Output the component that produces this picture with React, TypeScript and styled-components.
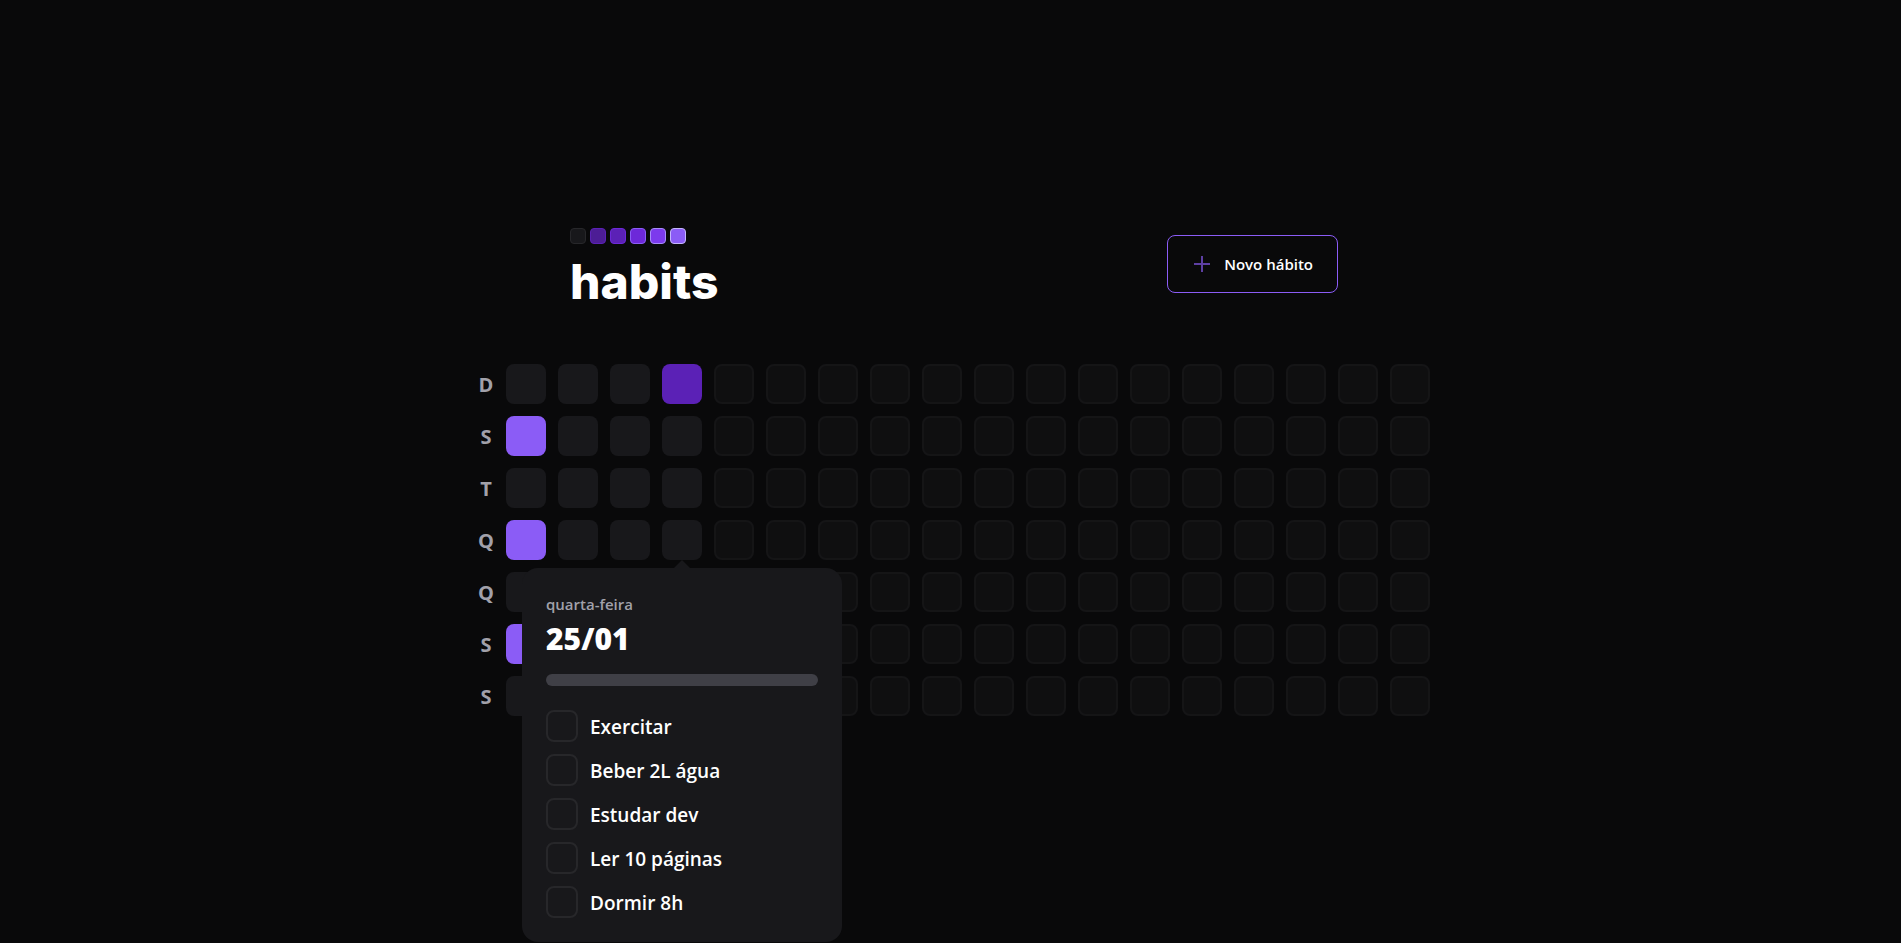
import { useState } from "react";
import styled, { createGlobalStyle } from "styled-components";

const GlobalStyle = createGlobalStyle`
  *, *::before, *::after { box-sizing: border-box; }
  body {
    margin: 0;
    background: #09090a;
    color: #ffffff;
    font-family: "Segoe UI", "Open Sans", "Noto Sans", sans-serif;
    font-size: 15px;
    line-height: 24px;
  }
  button, input { font: inherit; color: inherit; margin: 0; }
  h1, h2, p { margin: 0; }
`;

const Page = styled.div`
  min-height: 100vh;
  padding: 1px 0 0 7px;
  display: flex;
  justify-content: center;
  align-items: center;
`;

const Content = styled.main`
  width: 100%;
  max-width: 1024px;
  padding: 0 24px;
  display: flex;
  flex-direction: column;
  gap: 64px;
`;

const Header = styled.header`
  width: 100%;
  max-width: 768px;
  margin: 0 auto;
  display: flex;
  align-items: center;
  justify-content: space-between;
`;

const Logo = styled.div`
  display: flex;
  flex-direction: column;
  gap: 20px;
`;

const Swatches = styled.div`
  display: flex;
  gap: 4px;
`;

const Swatch = styled.span<{ $fill: string; $edge: string }>`
  width: 16px;
  height: 16px;
  border-radius: 4px;
  border: 1px solid ${(p) => p.$edge};
  background: ${(p) => p.$fill};
`;

const Wordmark = styled.h1`
  font-family: Inter, sans-serif;
  font-size: 48px;
  font-weight: 800;
  line-height: 36px;
`;

const NewHabitButton = styled.button`
  display: flex;
  align-items: center;
  gap: 12px;
  padding: 16px 24px;
  border: 1px solid #8b5cf6;
  border-radius: 8px;
  background: transparent;
  font-weight: 600;
  cursor: pointer;
`;

const Summary = styled.section`
  display: flex;
`;

const WeekDays = styled.div`
  display: grid;
  grid-template-rows: repeat(7, 40px);
  gap: 12px;
`;

const WeekDay = styled.span`
  width: 40px;
  padding-top: 2px;
  display: flex;
  align-items: center;
  justify-content: center;
  color: #a1a1aa;
  font-size: 20px;
  font-weight: 700;
`;

const Days = styled.div`
  display: grid;
  grid-template-rows: repeat(7, 40px);
  grid-auto-flow: column;
  grid-auto-columns: 40px;
  gap: 12px;
`;

const DaySlot = styled.div`
  position: relative;
  display: grid;
`;

const Day = styled.button<{ $color: string }>`
  padding: 0;
  border: 0;
  border-radius: 8px;
  background: ${(p) => p.$color};
  cursor: pointer;
`;

const FutureDay = styled.div`
  border: 2px solid #27272a;
  border-radius: 8px;
  background: #18181b;
  opacity: 0.4;
`;

const Popover = styled.div`
  position: absolute;
  z-index: 1;
  top: 48px;
  left: 50%;
  width: 320px;
  margin-left: -160px;
  padding: 24px;
  border-radius: 16px;
  background: #18181b;
  display: flex;
  flex-direction: column;
`;

const Arrow = styled.svg`
  position: absolute;
  bottom: 100%;
  left: 50%;
  margin-left: -8px;
`;

const DayName = styled.span`
  color: #a1a1aa;
  font-weight: 600;
`;

const DateTitle = styled.h2`
  margin-top: 4px;
  font-size: 30px;
  font-weight: 800;
  line-height: 38px;
`;

const ProgressTrack = styled.div`
  height: 12px;
  margin-top: 16px;
  border-radius: 6px;
  background: #3f3f46;
  overflow: hidden;
`;

const ProgressBar = styled.div`
  height: 100%;
  border-radius: 6px;
  background: #7c3aed;
`;

const HabitList = styled.div`
  margin-top: 24px;
  display: flex;
  flex-direction: column;
  gap: 12px;
`;

const Habit = styled.label`
  display: flex;
  align-items: center;
  gap: 12px;
  cursor: pointer;
`;

const HabitName = styled.span`
  padding-top: 2px;
  font-size: 19px;
  font-weight: 600;
  line-height: 28px;
`;

const Checkbox = styled.input`
  appearance: none;
  width: 32px;
  height: 32px;
  border: 2px solid #27272a;
  border-radius: 8px;
  background: #18181b;
  &:checked {
    border-color: #22c55e;
    background: #22c55e;
  }
`;

const swatches = [
  ["#18181b", "#27272a"],
  ["#4c1d95", "#5b21b6"],
  ["#5b21b6", "#6d28d9"],
  ["#6d28d9", "#8b5cf6"],
  ["#7c3aed", "#a78bfa"],
  ["#8b5cf6", "#c4b5fd"],
];

const weekDays = ["D", "S", "T", "Q", "Q", "S", "S"];
const habits = ["Exercitar", "Beber 2L água", "Estudar dev", "Ler 10 páginas", "Dormir 8h"];

const TOTAL_DAYS = 18 * 7;
const TODAY = 24;
const progressColors: Record<number, string> = {
  1: "#8b5cf6",
  3: "#8b5cf6",
  5: "#8b5cf6",
  21: "#5b21b6",
};

function HabitPopover() {
  const [done, setDone] = useState<string[]>([]);
  const toggle = (habit: string) =>
    setDone((d) => (d.includes(habit) ? d.filter((h) => h !== habit) : [...d, habit]));

  return (
    <Popover>
      <Arrow width="16" height="8" viewBox="0 0 16 8" aria-hidden="true">
        <path d="M0 8 8 0l8 8z" fill="#18181b" />
      </Arrow>
      <DayName>quarta-feira</DayName>
      <DateTitle>25/01</DateTitle>
      <ProgressTrack
        role="progressbar"
        aria-label="Progresso"
        aria-valuenow={done.length}
        aria-valuemax={habits.length}
      >
        <ProgressBar style={{ width: `${(done.length / habits.length) * 100}%` }} />
      </ProgressTrack>
      <HabitList>
        {habits.map((habit) => (
          <Habit key={habit}>
            <Checkbox type="checkbox" checked={done.includes(habit)} onChange={() => toggle(habit)} />
            <HabitName>{habit}</HabitName>
          </Habit>
        ))}
      </HabitList>
    </Popover>
  );
}

export default function App() {
  const [open, setOpen] = useState<number | null>(TODAY);

  return (
    <Page>
      <GlobalStyle />
      <Content>
        <Header>
          <Logo>
            <Swatches>
              {swatches.map(([fill, edge]) => (
                <Swatch key={fill} $fill={fill} $edge={edge} />
              ))}
            </Swatches>
            <Wordmark>habits</Wordmark>
          </Logo>
          <NewHabitButton type="button">
            <svg width="20" height="20" viewBox="0 0 20 20" fill="none" stroke="#8b5cf6" strokeOpacity="0.65" strokeWidth="2" aria-hidden="true">
              <path d="M2 10h16M10 2v16" />
            </svg>
            Novo hábito
          </NewHabitButton>
        </Header>
        <Summary>
          <WeekDays>
            {weekDays.map((day, i) => (
              <WeekDay key={i}>{day}</WeekDay>
            ))}
          </WeekDays>
          <Days>
            {Array.from({ length: TOTAL_DAYS }, (_, i) =>
              i < 28 ? (
                <DaySlot key={i}>
                  <Day
                    type="button"
                    aria-label={`Dia ${i + 1}`}
                    $color={progressColors[i] ?? "#18181b"}
                    onClick={() => setOpen(open === i ? null : i)}
                  />
                  {open === i && <HabitPopover />}
                </DaySlot>
              ) : (
                <FutureDay key={i} />
              ),
            )}
          </Days>
        </Summary>
      </Content>
    </Page>
  );
}
